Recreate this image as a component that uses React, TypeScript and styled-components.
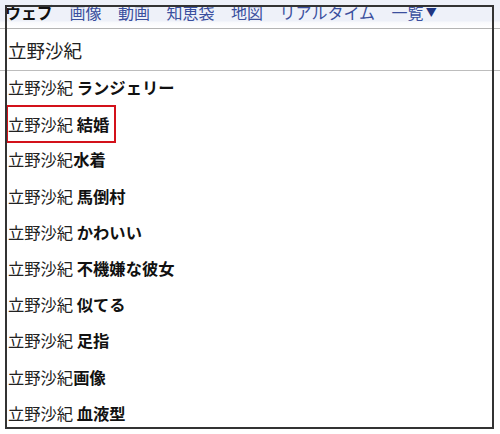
import React from 'react';
import styled, { createGlobalStyle } from 'styled-components';

const GlobalStyle = createGlobalStyle`
  html, body {
    margin: 0;
    padding: 0;
    background: #fff;
  }
  body {
    font-family: 'Noto Sans CJK JP', 'Noto Sans', sans-serif;
    color: #222;
  }
`;

const tabs = ['画像', '動画', '知恵袋', '地図', 'リアルタイム'];

const suggestions: { head: string; word: string; marked?: boolean }[] = [
  { head: '立野沙紀 ', word: 'ランジェリー' },
  { head: '立野沙紀 ', word: '結婚', marked: true },
  { head: '立野沙紀', word: '水着' },
  { head: '立野沙紀 ', word: '馬倒村' },
  { head: '立野沙紀 ', word: 'かわいい' },
  { head: '立野沙紀 ', word: '不機嫌な彼女' },
  { head: '立野沙紀 ', word: '似てる' },
  { head: '立野沙紀 ', word: '足指' },
  { head: '立野沙紀', word: '画像' },
  { head: '立野沙紀 ', word: '血液型' },
];

const App = () => {
  return (
    <Page>
      <GlobalStyle />
      <TabBar>
        <Tab active>ウェブ</Tab>
        {tabs.map(t => (
          <Tab key={t}>{t}</Tab>
        ))}
        <Tab>
          一覧<Caret>▼</Caret>
        </Tab>
      </TabBar>
      <InputRow>立野沙紀</InputRow>
      <List>
        {suggestions.map((s, i) => (
          <Row key={i}>
            <Entry marked={s.marked}>
              {s.head}
              <Strong>{s.word}</Strong>
            </Entry>
          </Row>
        ))}
      </List>
      <Frame />
    </Page>
  );
};

const Page = styled.div`
  position: relative;
  width: 500px;
  height: 434px;
  overflow: hidden;
  background: #fff;
`;

const TabBar = styled.div`
  display: flex;
  align-items: flex-start;
  gap: 16.5px;
  height: 28px;
  padding-left: 5px;
  background: linear-gradient(#eef1f9 0, #eef1f9 21px, #f8f9fc 22px, #fff 28px);
  border-bottom: 1px solid #b4b4b4;
  box-sizing: content-box;
`;

const Tab = styled.span<{ active?: boolean }>`
  font-size: 16px;
  line-height: 20px;
  margin-top: 2px;
  color: ${p => (p.active ? '#111' : '#3a4f9e')};
  font-weight: ${p => (p.active ? 700 : 400)};
  white-space: nowrap;
`;

const Caret = styled.span`
  font-size: 11px;
  margin-left: 2px;
  position: relative;
  top: -2px;
  color: #1f3582;
`;

const InputRow = styled.div`
  height: 41px;
  display: flex;
  align-items: center;
  padding-left: 8px;
  font-size: 18.5px;
  color: #222;
  border-bottom: 1px solid #bdbdbd;
`;

const List = styled.div`
  display: flex;
  flex-direction: column;
`;

const Row = styled.div`
  height: 36.2px;
  display: flex;
  align-items: center;
  padding-left: 8px;
  font-size: 16.3px;
  color: #222;
`;

const Entry = styled.span<{ marked?: boolean }>`
  display: inline-block;
  white-space: pre;
  line-height: 31px;
  margin-top: -3px;
  ${p =>
    p.marked &&
    `
    border: 2px solid #d3111a;
    margin-left: -2px;
    padding-right: 5px;
    line-height: 34px;
  `}
`;

const Strong = styled.b`
  font-weight: 700;
  color: #111;
`;

const Frame = styled.div`
  position: absolute;
  left: 5px;
  top: 5px;
  width: 489px;
  height: 424px;
  box-sizing: border-box;
  border: 2px solid #333;
  pointer-events: none;
`;

export default App;
